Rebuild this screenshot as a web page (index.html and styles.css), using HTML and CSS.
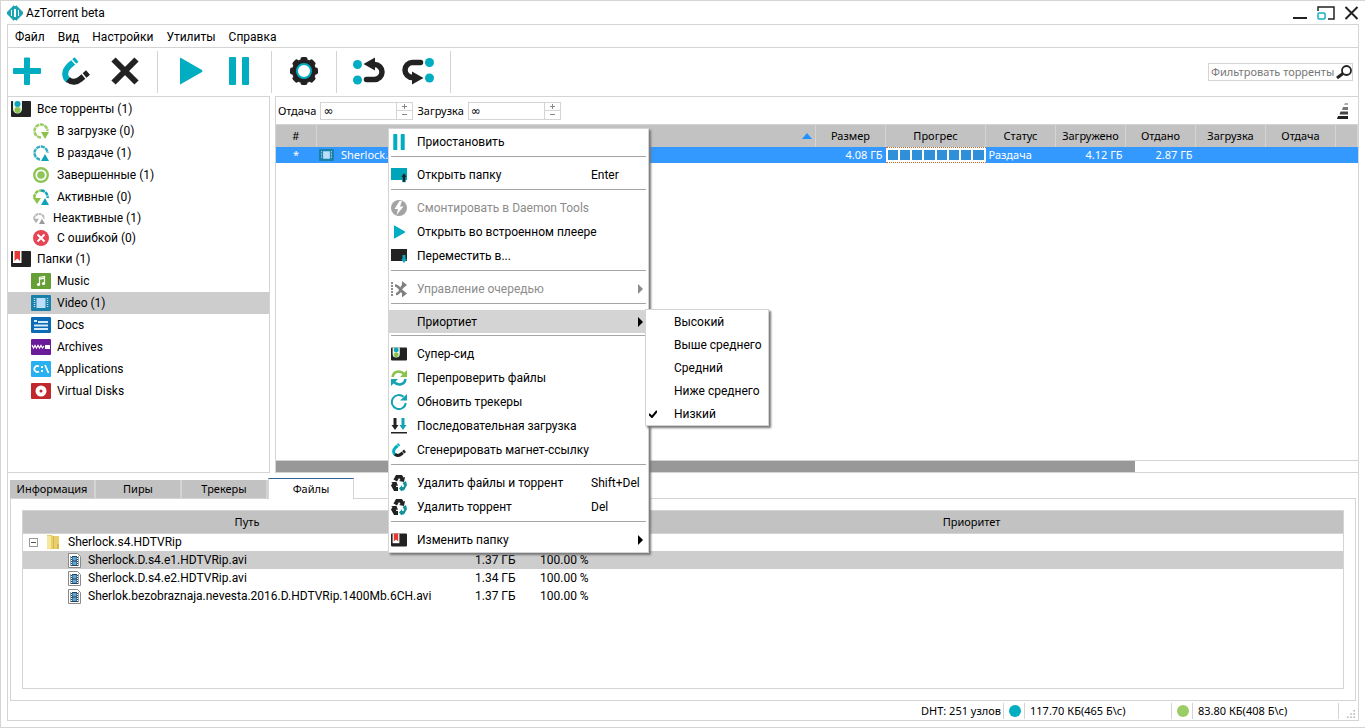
FILE: index.html
```html
<!DOCTYPE html>
<html lang="ru">
<head>
<meta charset="UTF-8">
<meta name="viewport" content="width=device-width, initial-scale=1.0">
<title>AzTorrent beta</title>
<link rel="stylesheet" href="styles.css">
</head>
<body>

<!-- Иконки -->
<svg class="sprite" aria-hidden="true">
  <symbol id="i-logo" viewBox="0 0 16 16">
    <path fill="#1aa3b3" d="M7 0v16L0 9V7zM9 0v16l7-7V7z"/>
    <path fill="#1aa3b3" d="M6 1h4v3H6zM6 12h4v3H6z"/>
    <path fill="#fff" d="M4 5h1v6H4zM7 4h2v8H7zM11 5h1v6h-1z"/>
  </symbol>
  <symbol id="i-add" viewBox="0 0 28 28"><path fill="#00adc1" d="M11 1.500q0-1 1-1h4q1 0 1 1V11h10q1 0 1 1v4q0 1-1 1H17v10q0 1-1 1h-4q-1 0-1-1V17H1q-1 0-1-1v-4q0-1 1-1h10z"/></symbol>
  <symbol id="i-magnet" viewBox="0 0 28 28">
    <path fill="none" stroke="#00adc1" stroke-width="6" d="M14.500 2.500 7 9C2 14 2 20 6.500 23.500"/>
    <path fill="none" stroke="#222" stroke-width="6" d="M6 22.500c4 3.500 9 2.500 12.500-.5l7.500-6.500"/>
    <path stroke="#fff" stroke-width="1.500" d="m9.500 2.500 6 6.500M19.500 16l5 6"/>
  </symbol>
  <symbol id="i-remove" viewBox="0 0 28 28"><path stroke="#222" stroke-width="6" d="m2.500 2.500 23 23m0-23-23 23"/></symbol>
  <symbol id="i-play" viewBox="0 0 28 28"><path fill="#00adc1" d="M4 1q0-1 1 0l21 12q1 1 0 2L5 27q-1 1-1 0z"/></symbol>
  <symbol id="i-pause" viewBox="0 0 28 28"><path fill="#00adc1" d="M5 0h5q1 0 1 1v26q0 1-1 1H5q-1 0-1-1V1q0-1 1-1zM18 0h5q1 0 1 1v26q0 1-1 1h-5q-1 0-1-1V1q0-1 1-1z"/></symbol>
  <symbol id="i-gear" viewBox="0 0 28 28">
    <g fill="#222">
      <circle cx="14" cy="14" r="12"/>
      <rect x="10.500" y="0" width="7" height="28" rx="2"/>
      <rect x="10.500" y="0" width="7" height="28" rx="2" transform="rotate(45 14 14)"/>
      <rect x="10.500" y="0" width="7" height="28" rx="2" transform="rotate(90 14 14)"/>
      <rect x="10.500" y="0" width="7" height="28" rx="2" transform="rotate(135 14 14)"/>
    </g>
    <circle cx="14" cy="14" r="7" fill="#fff" stroke="#00adc1" stroke-width="2"/>
  </symbol>
  <symbol id="i-back" viewBox="0 0 32 28">
    <circle cx="4.500" cy="7.500" r="4.500" fill="#00adc1"/><circle cx="4.500" cy="23" r="4.500" fill="#00adc1"/>
    <path fill="none" stroke="#222" stroke-width="5.500" stroke-linecap="round" d="M13.500 22.500H21.500a7.500 7.500 0 0 0 0-15h-2"/>
    <path fill="#222" d="M10.500 7 22 .5v13z"/>
  </symbol>
  <symbol id="i-forward" viewBox="0 0 32 28">
    <circle cx="27.500" cy="5.500" r="4.500" fill="#00adc1"/><circle cx="27.500" cy="21" r="4.500" fill="#00adc1"/>
    <path fill="none" stroke="#222" stroke-width="5.500" stroke-linecap="round" d="M18.500 5.500h-8a7.500 7.500 0 0 0 0 15h2"/>
    <path fill="#222" d="M21.500 21 10 14.500v13z"/>
  </symbol>
  <symbol id="i-all" viewBox="0 0 20 16">
    <rect width="20" height="16" rx="1" fill="#222"/>
    <path fill="#e6f4ea" d="M2 0h9v8a4.500 4.500 0 0 1-9 0z"/>
    <circle cx="6.500" cy="9" r="3" fill="#8bc34a"/><circle cx="6.500" cy="3" r="3" fill="#10a5bb"/>
  </symbol>
  <symbol id="i-folders" viewBox="0 0 20 16">
    <rect width="20" height="16" rx="1" fill="#222"/>
    <path fill="#fff" d="M2 0h8.500v12H2z"/><path fill="#e53935" d="M3.500 0H9v10L6.300 7.500 3.500 10z"/>
  </symbol>
  <symbol id="i-down" viewBox="0 0 16 16">
    <path fill="none" stroke="#9ccc65" stroke-width="2.500" stroke-dasharray="4 .7" d="M8 14.500A6.500 6.500 0 1 1 14.500 8"/><path fill="#8bc34a" d="M8 9h8l-4 7z"/>
  </symbol>
  <symbol id="i-up" viewBox="0 0 16 16">
    <path fill="none" stroke="#35aebf" stroke-width="2.500" stroke-dasharray="4 .7" d="M7 14.500A6.500 6.500 0 1 1 14.500 8"/><path fill="#0fa3b8" d="M8 16h8l-4-7z"/>
  </symbol>
  <symbol id="i-done" viewBox="0 0 16 16">
    <circle cx="8" cy="8" r="6.800" fill="#fff" stroke="#8fc456" stroke-width="2.400"/><circle cx="8" cy="8" r="3.800" fill="#8fc456"/>
  </symbol>
  <symbol id="i-active" viewBox="0 0 16 16">
    <path fill="none" stroke="#8bc34a" stroke-width="2.500" stroke-dasharray="4 .7" d="M1.500 9A6.500 6.500 0 0 1 8 1.500"/>
    <path fill="none" stroke="#0fa3b8" stroke-width="2.500" stroke-dasharray="4 .7" d="M8 1.500A6.500 6.500 0 0 1 14.500 9"/>
    <path fill="#8bc34a" d="M0 9h8l-4 6z"/><path fill="#0fa3b8" d="M8 16h8l-4-7z"/>
  </symbol>
  <symbol id="i-idle" viewBox="0 0 16 16">
    <path fill="none" stroke="#b5b5b5" stroke-width="2.500" stroke-dasharray="4 .7" d="M1.500 9a6.500 6.500 0 0 1 13 0"/>
    <path fill="#b0b0b0" d="M0 9h8l-4 6z"/><path fill="#9a9a9a" d="M8 16h8l-4-7z"/>
  </symbol>
  <symbol id="i-error" viewBox="0 0 16 16"><circle cx="8" cy="8" r="8" fill="#e64553"/><path stroke="#fff" stroke-width="2" d="m4.500 4.500 7 7m0-7-7 7"/></symbol>
  <symbol id="i-music" viewBox="0 0 20 16">
    <rect width="20" height="16" rx="1" fill="#669f35"/><path fill="none" stroke="#fff" stroke-width="1.200" d="M8.500 11.500V4.500l5-1v7M8.500 6.200l5-1"/><circle cx="7.500" cy="11.500" r="1.600" fill="#fff"/><circle cx="12.500" cy="10.500" r="1.600" fill="#fff"/>
  </symbol>
  <symbol id="i-video" viewBox="0 0 20 16">
    <rect width="20" height="16" rx="1" fill="#1a82a8"/><path fill="#bbdefb" d="M5.500 3h9v10h-9z"/><path stroke="#bbdefb" stroke-width="1.500" stroke-dasharray="1 1" d="M3.500 3v10M16.500 3v10"/>
  </symbol>
  <symbol id="i-docs" viewBox="0 0 20 16">
    <rect width="20" height="16" rx="1" fill="#0a6ab5"/><path stroke="#d6ebfa" stroke-width="1.800" d="M3 4h3M7 5h10M3 8.500h14M3 12h14"/>
  </symbol>
  <symbol id="i-archives" viewBox="0 0 20 16">
    <rect width="20" height="16" rx="1" fill="#6a1b9a"/><path fill="none" stroke="#fff" stroke-width="1.200" d="m1 6 1.500 3L4 6.500 5.500 9 7 6.500 8.500 9 10 6.500 11.500 9 13 7"/><path fill="#fff" d="M14 6h5v4h-5z"/>
  </symbol>
  <symbol id="i-apps" viewBox="0 0 20 16">
    <rect width="20" height="16" rx="1" fill="#29b0f0"/><path fill="none" stroke="#fff" stroke-width="1.700" d="M8 5.500a3 3 0 1 0 0 5M14 4l3.500 8"/><path fill="#fff" d="M10 5h2v2h-2zM10 9h2v2h-2z"/>
  </symbol>
  <symbol id="i-disks" viewBox="0 0 20 16">
    <rect width="20" height="16" rx="1" fill="#c1282d"/><circle cx="10" cy="8" r="5.500" fill="#fff"/><circle cx="10" cy="8" r="1.500" fill="#c1282d"/>
  </symbol>
  <symbol id="i-open" viewBox="0 0 16 16"><path fill="#00a5ba" d="M0 1h16v12H0z"/><path fill="#222" stroke="#00a5ba" stroke-width=".5" d="m13 6 3 4h-1.500v5h-3v-5H10z"/></symbol>
  <symbol id="i-move" viewBox="0 0 16 16"><path fill="#222" d="M0 1h16v12H0z"/><path fill="#10a5bb" d="M11.500 7h3v4H16l-3 4-3-4h1.500z"/></symbol>
  <symbol id="i-daemon" viewBox="0 0 16 16"><circle cx="8" cy="8" r="8" fill="#a3a3a3"/><path fill="#fff" d="m8.500 1-5 8H7l-1.500 6 7-8.500H9L11 1z"/></symbol>
  <symbol id="i-queue" viewBox="0 0 16 16">
    <path stroke="#8c8c8c" stroke-width="2" stroke-dasharray="2 1" d="M1 1v15"/>
    <path fill="none" stroke="#808080" stroke-width="2.500" d="M4 4.500c5 0 6 8 10 8M5 13c5 0 5-9 8-9"/><path fill="#808080" d="m11 0 5 4-5 4zM11 8.500l5 4-5 4z"/>
  </symbol>
  <symbol id="i-recheck" viewBox="0 0 16 16">
    <path fill="none" stroke="#8bc34a" stroke-width="2.500" d="M1.500 7C2.500 1 9 0 13 4"/><path fill="#8bc34a" d="M16 0v7H9z"/>
    <path fill="none" stroke="#14a2b5" stroke-width="2.500" d="M14.500 9c-1 6-7.500 7-11.500 3"/><path fill="#14a2b5" d="M0 16V9h7z"/>
  </symbol>
  <symbol id="i-refresh" viewBox="0 0 16 16"><path fill="none" stroke="#14a2b5" stroke-width="2" d="M14.800 9A7 7 0 1 1 12.500 2.800"/><path fill="#14a2b5" d="M16 0v6.500H9z"/></symbol>
  <symbol id="i-seq" viewBox="0 0 16 16"><path fill="#222" d="M2.500 0h3v7h2L4 12 .5 7h2zM0 14h16v1.500H0z"/><path fill="#14a2b5" d="M10.500 0h3v7h2L12 12 8.500 7h2z"/></symbol>
  <symbol id="i-recycle" viewBox="0 0 16 16">
    <path fill="#222" d="M5 0h6l1.500 2.500L14 2l-1 5-5-1 1.500-1L8 3 6 6.500 2.500 4.500z"/>
    <path fill="#222" d="M0 7h5.500L7 11l-1.500-.5L5 12h2v4H3L0 10.500 1.500 8z"/>
    <path fill="#14939f" d="m11.500 8 3.500-2 1 4-3 5.500h-2V17L8 13.500 11 10v2h1.500l.5-1.500z"/>
  </symbol>
  <symbol id="i-search" viewBox="0 0 16 14"><circle cx="10.500" cy="5.500" r="4.500" fill="none" stroke="#222" stroke-width="1.800"/><path stroke="#222" stroke-width="3" d="m7 8.500-6 4.500"/></symbol>
  <symbol id="i-folder" viewBox="0 0 14 16"><path fill="#e9cf6b" d="M1 1h5l1 1h6v13H1z"/><path fill="#f7e79a" d="M1 2h4v14l-4-2z"/><path fill="#d7b64a" d="M7 2h1v13H7zM11 10h2v5h-2z"/></symbol>
  <symbol id="i-file" viewBox="0 0 13 15">
    <path fill="#fff" stroke="#8a8a8a" d="M.5.5h9l3 3v11H.5z"/><path fill="#2b4258" d="M2.500 3h8v10h-8z"/><path fill="#5aa7dc" d="M4.500 4h4v3.500h-4zM4.500 8.500h4V12h-4z"/><path stroke="#fff" stroke-dasharray="1 1" d="M3.500 3v10M9.500 3v10"/>
  </symbol>
</svg>

<header class="titlebar">
  <svg class="logo"><use href="#i-logo"/></svg>
  <span class="app-name">AzTorrent beta</span>
  <div class="window-buttons">
    <button aria-label="Свернуть"><svg viewBox="0 0 15 14"><path stroke="#222" stroke-width="2" d="M0 12h14"/></svg></button>
    <button aria-label="Развернуть"><svg class="wide" viewBox="0 0 18 14"><path fill="none" stroke="#222" stroke-width="1.500" d="M1 5V1h16v12h-6"/><rect x="1" y="7" width="7" height="6" rx="1" fill="none" stroke="#14b0c4" stroke-width="1.500"/></svg></button>
    <button aria-label="Закрыть"><svg viewBox="0 0 14 14"><path stroke="#222" stroke-width="2" d="m1 1 12 12M13 1 1 13"/></svg></button>
  </div>
</header>

<div class="window">
  <nav class="menubar">
    <button>Файл</button>
    <button>Вид</button>
    <button>Настройки</button>
    <button>Утилиты</button>
    <button>Справка</button>
  </nav>

  <div class="toolbar">
    <div class="tool-group">
      <button aria-label="Добавить"><svg><use href="#i-add"/></svg></button>
      <button aria-label="Магнет-ссылка"><svg><use href="#i-magnet"/></svg></button>
      <button aria-label="Удалить"><svg><use href="#i-remove"/></svg></button>
    </div>
    <div class="tool-group">
      <button aria-label="Запустить"><svg><use href="#i-play"/></svg></button>
      <button aria-label="Пауза"><svg><use href="#i-pause"/></svg></button>
    </div>
    <div class="tool-group">
      <button aria-label="Настройки"><svg><use href="#i-gear"/></svg></button>
    </div>
    <div class="tool-group arrows">
      <button aria-label="Выше в очереди"><svg><use href="#i-back"/></svg></button>
      <button aria-label="Ниже в очереди"><svg><use href="#i-forward"/></svg></button>
    </div>
    <label class="filter">
      <input type="text" placeholder="Фильтровать торренты" aria-label="Фильтровать торренты">
      <svg><use href="#i-search"/></svg>
    </label>
  </div>

  <main class="panes">
    <aside class="sidebar">
      <a href="#" class="root"><svg><use href="#i-all"/></svg>Все торренты (1)</a>
      <a href="#" class="state"><svg><use href="#i-down"/></svg>В загрузке (0)</a>
      <a href="#" class="state"><svg><use href="#i-up"/></svg>В раздаче (1)</a>
      <a href="#" class="state"><svg><use href="#i-done"/></svg>Завершенные (1)</a>
      <a href="#" class="state"><svg><use href="#i-active"/></svg>Активные (0)</a>
      <a href="#" class="state low small"><svg><use href="#i-idle"/></svg>Неактивные (1)</a>
      <a href="#" class="state low"><svg><use href="#i-error"/></svg>С ошибкой (0)</a>
      <a href="#" class="root"><svg><use href="#i-folders"/></svg>Папки (1)</a>
      <a href="#"><svg><use href="#i-music"/></svg>Music</a>
      <a href="#" class="selected"><svg><use href="#i-video"/></svg>Video (1)</a>
      <a href="#"><svg><use href="#i-docs"/></svg>Docs</a>
      <a href="#"><svg><use href="#i-archives"/></svg>Archives</a>
      <a href="#"><svg><use href="#i-apps"/></svg>Applications</a>
      <a href="#"><svg><use href="#i-disks"/></svg>Virtual Disks</a>
    </aside>

    <section class="torrents">
      <div class="rates">
        <label for="rate-up">Отдача</label>
        <div class="spin">
          <input type="text" id="rate-up" value="∞">
          <div class="spin-buttons"><button class="plus" aria-label="Больше"></button><button aria-label="Меньше"></button></div>
        </div>
        <label for="rate-down">Загрузка</label>
        <div class="spin">
          <input type="text" id="rate-down" value="∞">
          <div class="spin-buttons"><button class="plus" aria-label="Больше"></button><button aria-label="Меньше"></button></div>
        </div>
        <svg class="levels" viewBox="0 0 12 16"><path fill="#aaa" d="M8 0h3v2H7z"/><path fill="#777" d="M6 4h5v3H5z"/><path fill="#444" d="M3.500 8.500H11v3H2.500z"/><path fill="#222" d="M1 13h10v3H0z"/></svg>
      </div>

      <table class="torrent-table">
        <colgroup><col class="c-num"><col><col class="c-std"><col class="c-progress"><col class="c-std"><col class="c-std"><col class="c-std"><col class="c-std"><col class="c-std"><col class="c-rest"></colgroup>
        <thead>
          <tr>
            <th>#</th><th><i class="sort-arrow"></i></th><th>Размер</th><th>Прогрес</th><th>Статус</th><th>Загружено</th><th>Отдано</th><th>Загрузка</th><th>Отдача</th><th></th>
          </tr>
        </thead>
        <tbody>
          <tr>
            <td class="center">*</td>
            <td><div class="name"><svg><use href="#i-video"/></svg>Sherlock.s4.HDTVRip</div></td>
            <td class="right">4.08 ГБ</td>
            <td class="progress-cell"><div class="progress"><i></i><i></i><i></i><i></i><i></i><i></i><i></i><i></i></div></td>
            <td>Раздача</td>
            <td class="right">4.12 ГБ</td>
            <td class="right">2.87 ГБ</td>
            <td></td><td></td><td></td>
          </tr>
        </tbody>
      </table>
      <div class="scrollbar"><div class="thumb"></div></div>

      <!-- Контекстное меню торрента -->
      <div class="context-menu">
        <button><svg><use href="#i-pause"/></svg><span>Приостановить</span></button>
        <hr>
        <button><svg><use href="#i-open"/></svg><span>Открыть папку</span><kbd>Enter</kbd></button>
        <hr>
        <button disabled><svg><use href="#i-daemon"/></svg><span>Смонтировать в Daemon Tools</span></button>
        <button><svg class="little"><use href="#i-play"/></svg><span>Открыть во встроенном плеере</span></button>
        <button><svg><use href="#i-move"/></svg><span>Переместить в...</span></button>
        <hr>
        <button class="parent" disabled><svg><use href="#i-queue"/></svg><span>Управление очередью</span></button>
        <hr>
        <button class="parent open"><svg></svg><span>Приортиет</span></button>
        <hr>
        <button><svg><use href="#i-all"/></svg><span>Супер-сид</span></button>
        <button><svg><use href="#i-recheck"/></svg><span>Перепроверить файлы</span></button>
        <button><svg><use href="#i-refresh"/></svg><span>Обновить трекеры</span></button>
        <button><svg><use href="#i-seq"/></svg><span>Последовательная загрузка</span></button>
        <button><svg class="little"><use href="#i-magnet"/></svg><span>Сгенерировать магнет-ссылку</span></button>
        <hr>
        <button><svg><use href="#i-recycle"/></svg><span>Удалить файлы и торрент</span><kbd>Shift+Del</kbd></button>
        <button><svg><use href="#i-recycle"/></svg><span>Удалить торрент</span><kbd>Del</kbd></button>
        <hr>
        <button class="parent"><svg><use href="#i-folders"/></svg><span>Изменить папку</span></button>

        <div class="submenu">
          <button>Высокий</button>
          <button>Выше среднего</button>
          <button>Средний</button>
          <button>Ниже среднего</button>
          <button class="checked"><svg viewBox="0 0 8 8"><path fill="none" stroke="#000" stroke-width="2" d="m0 4 3 3 5-6"/></svg>Низкий</button>
        </div>
      </div>
    </section>
  </main>

  <section class="details">
    <div class="tabs">
      <button>Информация</button>
      <button>Пиры</button>
      <button>Трекеры</button>
      <button class="active">Файлы</button>
    </div>
    <div class="tab-body">
      <div class="file-list">
        <table class="file-table">
          <colgroup><col class="f-path"><col class="f-size"><col class="f-done"><col></colgroup>
          <thead>
            <tr><th>Путь</th><th></th><th></th><th>Приоритет</th></tr>
          </thead>
          <tbody>
            <tr><td><div class="dir"><button class="toggle" aria-label="Свернуть папку"></button><svg><use href="#i-folder"/></svg>Sherlock.s4.HDTVRip</div></td><td></td><td></td><td></td></tr>
            <tr class="selected"><td><div class="file"><svg><use href="#i-file"/></svg>Sherlock.D.s4.e1.HDTVRip.avi</div></td><td>1.37 ГБ</td><td>100.00 %</td><td></td></tr>
            <tr><td><div class="file"><svg><use href="#i-file"/></svg>Sherlock.D.s4.e2.HDTVRip.avi</div></td><td>1.34 ГБ</td><td>100.00 %</td><td></td></tr>
            <tr><td><div class="file"><svg><use href="#i-file"/></svg>Sherlok.bezobraznaja.nevesta.2016.D.HDTVRip.1400Mb.6CH.avi</div></td><td>1.37 ГБ</td><td>100.00 %</td><td></td></tr>
          </tbody>
        </table>
      </div>
    </div>
  </section>

  <footer class="statusbar">
    <span class="dht">DHT: 251 узлов</span>
    <span class="lamp"><i class="dot"></i></span>
    <span class="speed">117.70 КБ(465 Б\с)</span>
    <span class="lamp"><i class="dot green"></i></span>
    <span class="speed">83.80 КБ(408 Б\с)</span>
    <svg class="grip" viewBox="0 0 10 10"><path fill="#b5b5b5" d="M8 0h2v2H8zM4 4h2v2H4zM8 4h2v2H8zM0 8h2v2H0zM4 8h2v2H4zM8 8h2v2H8z"/></svg>
  </footer>
</div>

</body>
</html>
```
FILE: styles.css
```css
* {
  box-sizing: border-box;
}

body {
  margin: 0;
  min-height: 100vh;
  display: flex;
  flex-direction: column;
  padding: 0 6px 6px;
  border: 1px solid #d4d4d4;
  border-right-width: 0;
  background: #fff;
  color: #000;
  font-family: Roboto, "Noto Sans", sans-serif;
  font-size: 12px;
  line-height: 16px;
}

button,
input {
  margin: 0;
  padding: 0;
  border: 0;
  background: none;
  color: inherit;
  font: inherit;
}

svg {
  display: block;
  flex: none;
}

.sprite {
  position: absolute;
  width: 0;
  height: 0;
}

/* Мелкий шрифт таблиц и вкладок */
.filter,
.rates,
.torrent-table,
.file-table th,
.tabs,
.statusbar {
  font-family: "Noto Sans", "Open Sans", sans-serif;
  font-size: 11px;
}

/* Заголовок окна */
.titlebar {
  display: flex;
  align-items: center;
  height: 23px;
}

.logo {
  width: 16px;
  height: 16px;
}

.app-name {
  margin-left: 3px;
}

.window-buttons {
  display: flex;
  gap: 9px;
  margin-left: auto;
}

.window-buttons svg {
  width: 15px;
  height: 14px;
}

.window-buttons .wide {
  width: 18px;
}

.window {
  flex: 1;
  display: flex;
  flex-direction: column;
  border: 1px solid #d4d4d4;
}

.menubar {
  display: flex;
  gap: 13px;
  height: 23px;
  padding: 2px 0 0 7px;
  border-bottom: 1px solid #d4d4d4;
}

/* Панель инструментов */
.toolbar {
  display: flex;
  align-items: center;
  height: 48px;
  padding: 0 5px;
}

.tool-group {
  display: flex;
  gap: 21px;
  align-items: center;
  height: 42px;
  padding-right: 18px;
  margin-right: 18px;
  border-right: 1px solid #d4d4d4;
}

.tool-group svg {
  width: 28px;
  height: 28px;
  margin-bottom: 2px;
}

.arrows {
  gap: 17px;
  padding-right: 16px;
  margin-left: -2px;
}

.arrows svg {
  width: 32px;
}

.filter {
  display: flex;
  align-items: center;
  width: 145px;
  height: 18px;
  margin-left: auto;
  border: 1px solid #d4d4d4;
}

.filter input {
  flex: 1;
  min-width: 0;
  padding-left: 2px;
}

.filter input::placeholder {
  color: #777;
  opacity: 1;
}

.filter svg {
  width: 16px;
  height: 14px;
}

/* Левая панель */
.panes {
  flex: 1;
  display: flex;
  gap: 5px;
  min-height: 0;
}

.sidebar {
  width: 262px;
  padding-top: 1px;
  border: 1px solid #d4d4d4;
  border-left: 0;
}

.sidebar a {
  display: flex;
  align-items: center;
  gap: 6px;
  height: 22px;
  padding-left: 23px;
  color: #000;
  text-decoration: none;
}

.sidebar svg {
  width: 20px;
  height: 16px;
}

.sidebar .root {
  padding-left: 3px;
}

.sidebar .state {
  gap: 8px;
  padding-left: 25px;
}

.sidebar .state svg {
  width: 16px;
}

.sidebar .low {
  height: 20px;
}

.sidebar .small svg {
  width: 12px;
  height: 12px;
}

.sidebar .selected,
.file-table .selected {
  background: #cdcdcd;
}

/* Список торрентов */
.torrents {
  flex: 1;
  position: relative;
  display: flex;
  flex-direction: column;
  border: 1px solid #d4d4d4;
  border-right: 0;
}

.rates {
  display: flex;
  align-items: center;
  gap: 4px;
  height: 27px;
  padding: 0 9px 0 2px;
}

.spin {
  display: flex;
  width: 93px;
  height: 18px;
  border: 1px solid #d4d4d4;
}

.spin input {
  flex: 1;
  min-width: 0;
  padding-left: 2px;
  font-family: "DejaVu Sans", sans-serif;
  font-size: 12px;
}

.spin-buttons {
  display: flex;
  flex-direction: column;
  width: 16px;
  border-left: 1px solid #d4d4d4;
}

.spin-buttons button {
  flex: 1;
  background: linear-gradient(#888, #888) center / 5px 1px no-repeat;
}

.spin-buttons .plus {
  border-bottom: 1px solid #d4d4d4;
  background:
    linear-gradient(#888, #888) center / 5px 1px no-repeat,
    linear-gradient(#888, #888) center / 1px 5px no-repeat;
}

.levels {
  width: 12px;
  height: 16px;
  margin-left: auto;
}

table {
  width: 100%;
  border-collapse: collapse;
  table-layout: fixed;
}

th,
td {
  padding: 0;
  white-space: nowrap;
}

th {
  background: #c2c2c2;
  font-weight: normal;
}

.torrent-table th {
  height: 22px;
  border-top: 1px solid #d4d4d4;
  border-right: 1px solid #d4d4d4;
}

.torrent-table td {
  height: 16px;
  padding: 0 3px;
}

.torrent-table tbody tr {
  background: #3399ff;
  color: #fff;
}

.c-num {
  width: 40px;
}

.c-std {
  width: 70px;
}

.c-progress {
  width: 100px;
}

.c-rest {
  width: 22px;
}

.torrent-table .center {
  text-align: center;
}

.torrent-table .right {
  text-align: right;
}

.sort-arrow {
  display: block;
  width: 10px;
  margin: 0 3px 0 auto;
  border: 5px solid transparent;
  border-top: 0;
  border-bottom: 6px solid #1e90ff;
}

.name {
  display: flex;
  align-items: center;
  gap: 7px;
}

.name svg {
  width: 15px;
  height: 12px;
}

.torrent-table .progress-cell {
  padding: 0;
}

.progress {
  display: flex;
  gap: 2px;
  height: 16px;
  padding: 2px;
  border: 1px dotted #c56b2c;
  border-width: 1px 0;
  background: #fff;
}

.progress i {
  flex: 1;
  background: #2f8fd8;
}

.scrollbar {
  height: 12px;
  margin-top: auto;
  border-top: 1px solid #d4d4d4;
}

.thumb {
  width: 859px;
  max-width: 80%;
  height: 11px;
  background: #989898;
}

/* Контекстное меню */
.context-menu,
.submenu {
  position: absolute;
  background: #fff;
  border: 1px solid #d4d4d4;
  box-shadow: 2px 2px 2px #777;
}

.context-menu {
  top: 31px;
  left: 112px;
  z-index: 1;
  width: 261px;
  padding-top: 1px;
}

.context-menu button {
  display: flex;
  align-items: center;
  width: 100%;
  height: 24px;
  padding: 0 5px 0 2px;
  text-align: left;
  white-space: nowrap;
}

.context-menu button:disabled {
  color: #8c8c8c;
}

.context-menu svg {
  width: 16px;
  height: 16px;
}

.context-menu .little {
  height: 14px;
}

.context-menu span {
  margin-left: 10px;
}

.context-menu kbd {
  width: 52px;
  margin-left: auto;
  font: inherit;
}

.context-menu hr {
  height: 9px;
  margin: 0 2px;
  border: 0;
  background: linear-gradient(#a5a5a5, #a5a5a5) 0 2px / 100% 1px no-repeat;
}

.context-menu .parent::after {
  content: "";
  margin-left: auto;
  border: 5px solid transparent;
  border-left-color: currentColor;
  border-right: 0;
}

.context-menu .open {
  height: 23px;
  background: #d4d4d4;
}

.submenu {
  top: 180px;
  left: 256px;
  width: 124px;
}

.context-menu .submenu button {
  height: 23px;
  padding-left: 28px;
}

.context-menu .submenu .checked {
  padding-left: 3px;
}

.submenu .checked svg {
  width: 8px;
  height: 8px;
  margin-right: 17px;
}

/* Нижняя панель */
.details {
  display: flex;
  flex-direction: column;
  padding: 5px 2px 0;
}

.tabs {
  display: flex;
  align-items: flex-end;
}

.tabs button {
  width: 86px;
  height: 18px;
  border-right: 2px solid #d4d4d4;
  background: #c2c2c2;
}

.tabs .active {
  position: relative;
  height: 21px;
  margin-bottom: -1px;
  border: 1px solid #d4d4d4;
  border-top-color: #33629a;
  border-bottom: 0;
  background: #fff;
}

.tab-body {
  padding: 11px;
  border: 1px solid #d4d4d4;
}

.file-list {
  min-height: 179px;
  border: 1px solid #d4d4d4;
}

.file-table th {
  height: 22px;
  border-bottom: 1px solid #d4d4d4;
}

.file-table td {
  height: 18px;
}

.f-path {
  width: 448px;
}

.f-size {
  width: 65px;
}

.f-done {
  width: 64px;
}

.file-table td + td {
  padding-left: 4px;
}

.dir,
.file {
  display: flex;
  align-items: center;
  gap: 7px;
  padding-left: 6px;
}

.dir {
  gap: 8px;
}

.dir svg {
  width: 14px;
  height: 16px;
}

.toggle {
  width: 9px;
  height: 9px;
  border: 1px solid #999;
  background: linear-gradient(#555, #555) center / 5px 1px no-repeat;
}

.file {
  padding-left: 45px;
}

.file svg {
  width: 13px;
  height: 15px;
}

/* Строка состояния */
.statusbar {
  display: flex;
  align-items: center;
  justify-content: flex-end;
  height: 19px;
  padding-right: 3px;
}

.dht {
  padding-right: 2px;
}

.lamp {
  width: 22px;
  padding-left: 5px;
  border: 1px solid #d4d4d4;
  border-width: 0 1px;
}

.dot {
  display: block;
  width: 12px;
  height: 12px;
  margin: 2px 0;
  border-radius: 50%;
  background: #00adc1;
}

.dot.green {
  background: #9ccc65;
}

.speed {
  width: 146px;
  padding-left: 5px;
}

.speed:nth-of-type(5) {
  border-right: 1px solid #d4d4d4;
}

.grip {
  width: 8px;
  height: 8px;
  margin: 6px 0 0 8px;
}
```
